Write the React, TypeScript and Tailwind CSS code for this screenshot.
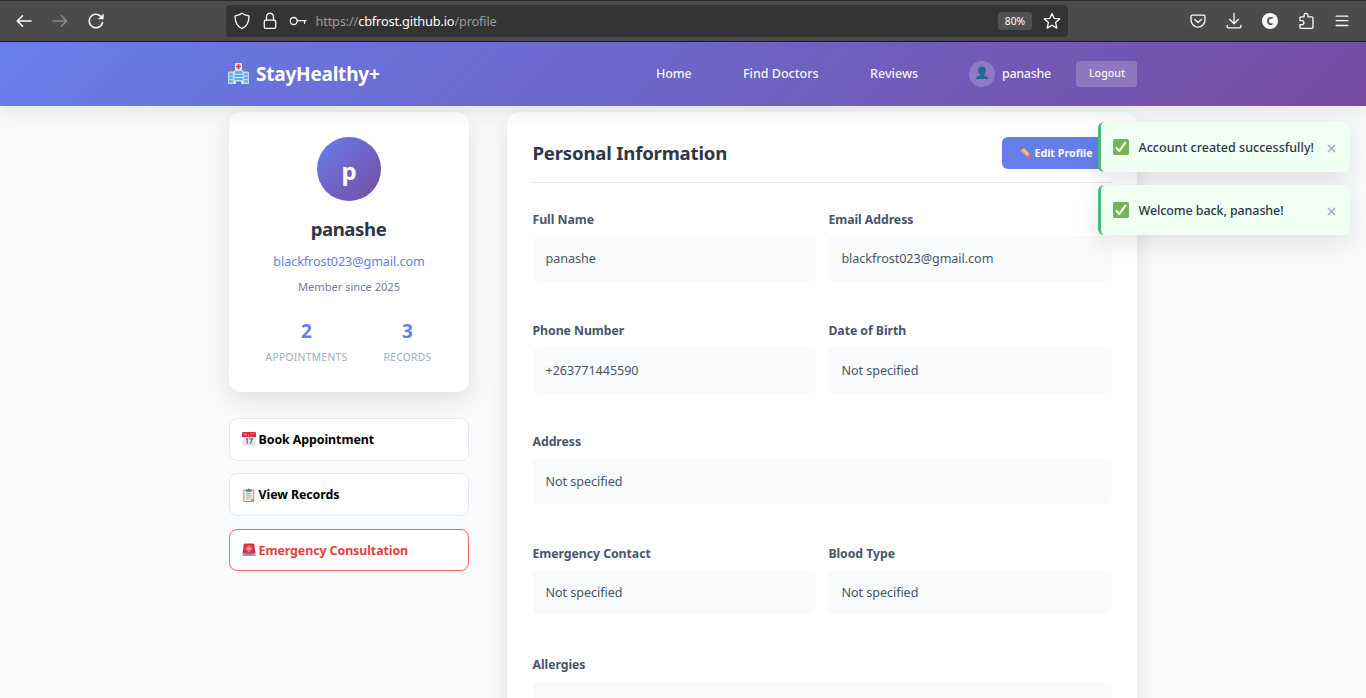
import type { ReactNode } from "react";

function Icon({ children, className = "", size = 18 }: { children: ReactNode; className?: string; size?: number }) {
  return (
    <svg
      width={size}
      height={size}
      viewBox="0 0 16 16"
      fill="none"
      stroke="currentColor"
      strokeWidth="1.15"
      strokeLinecap="round"
      strokeLinejoin="round"
      className={`shrink-0 ${className}`}
    >
      {children}
    </svg>
  );
}

function HospitalIcon() {
  return (
    <svg width="21" height="21" viewBox="0 0 21 21" className="mb-px shrink-0">
      <rect x="7" y="0" width="7" height="7" rx="0.8" fill="#e1e8ed" />
      <path d="M10.500 1v5M8 3.500h5" stroke="#dd2e44" strokeWidth="1.700" />
      <path d="M0 9.500 1 8.500h4.500L7 6.500h7l1.500 2H20l1 1V21H0z" fill="#ccd6dd" />
      <path d="M6 8h9v13H6z" fill="#e1e8ed" />
      <path d="M1.200 10.200h3.600v2.300H1.200zM1.200 13.700h3.600V16H1.200zM1.200 17.200h3.600v2.300H1.200zM16.200 10.200h3.600v2.300h-3.600zM16.200 13.700h3.600V16h-3.600zM16.200 17.200h3.600v2.300h-3.600zM7 8.300h7.500v2.500H7zM6.500 11.700h8.300v2.300H6.500zM6.500 15h8.300v2.200H6.500z" fill="#55acee" />
      <path d="M8 18.500h5.200V21H8z" fill="#3b88c3" />
    </svg>
  );
}

function CalendarIcon() {
  return (
    <svg width="14" height="14" viewBox="0 0 14 14" className="shrink-0">
      <path d="M.5 5h13v7.800c0 .7-.5 1.200-1.200 1.200H1.700C1 14 .5 13.500.5 12.800z" fill="#e1e8ed" />
      <path d="M1.200 0h11.600c.7 0 1.200.5 1.200 1.200V5H0V1.200C0 .5.5 0 1.200 0z" fill="#dd2e44" />
      <path d="M2 1.800l1 1.400M4 1.500v1.800M6 3.400h1M9 1.500h.8M11 1.500h1.200" stroke="#f4abba" strokeWidth="0.9" />
      <path d="M4 7.300l1.300-.6V12M7.200 6.900h3.200C9.300 8.500 8.700 10 8.600 12" stroke="#66757f" strokeWidth="1.200" fill="none" />
    </svg>
  );
}

function ClipboardIcon() {
  return (
    <svg width="14" height="14" viewBox="0 0 14 14" className="shrink-0">
      <rect x="1.300" y="1.500" width="11" height="12.500" rx="1.100" fill="#c58a76" />
      <path d="M2.300 2.600h9v8L8.700 13.100H2.300z" fill="#e8eef2" />
      <path d="M11.300 10.600 8.700 13.100v-2.500z" fill="#b3bfc8" />
      <path d="M4.200 5.500h5.400M4.200 7.300h5.400M4.200 9.100h5.400M4.200 10.900h3" stroke="#99aab5" strokeWidth="0.8" />
      <path d="M4 1.800h1.500a1.300 1.300 0 0 1 2.600 0h1.500v1.900H4z" fill="#66757f" />
    </svg>
  );
}

function SirenIcon() {
  return (
    <svg width="14" height="14" viewBox="0 0 14 14" className="shrink-0">
      <path d="M2.800.5h8.400c.6 0 1 .4 1.100 1L13.500 10.500H.5L1.700 1.500c.1-.6.5-1 1.100-1z" fill="#dd2e44" />
      <path d="M7 2.200v7M3.700 5.700h6.600M4.700 3.400l4.600 4.600M9.300 3.400 4.700 8" stroke="#f4abba" strokeWidth="1" />
      <path d="M.5 10.300h13l.5 2.700H0z" fill="#99aab5" />
      <path d="M2.500 10.300h9v1.200h-9z" fill="#66757f" />
    </svg>
  );
}

function PencilIcon() {
  return (
    <svg width="12" height="12" viewBox="0 0 12 12" className="shrink-0">
      <path d="M.6.6 3.600 1.500 1.500 3.700z" fill="#662113" />
      <path d="M1 1.400 3.900 1.200 4.700 2 2 4.700l-.8-.8z" fill="#ea9a7a" />
      <path d="M4.100 1.500 9.300 6.600 6.600 9.300 1.500 4.100z" fill="#ffcc4d" />
      <path d="M1.500 4.100 2.600 2.900l5.300 5.200-1.300 1.200z" fill="#f4a640" />
      <path d="M9.300 6.600l1 1-2.700 2.700-1-1z" fill="#99aab5" />
      <path d="M10.300 7.600l1 1c.9 1-1.700 3.600-2.700 2.700l-1-1z" fill="#ea596e" />
    </svg>
  );
}

function CheckIcon() {
  return (
    <svg width="16" height="16" viewBox="0 0 16 16" className="shrink-0">
      <rect width="16" height="16" rx="1.800" fill="#77b255" />
      <path d="M3.400 8.900 6.300 12 12.400 3.700" stroke="#fff" strokeWidth="2.100" strokeLinecap="round" strokeLinejoin="round" fill="none" />
    </svg>
  );
}

function BrowserBar() {
  return (
    <div className="flex h-[42px] shrink-0 items-center border-t border-b border-t-[#2a2a2e] border-b-[#1c1b1d] bg-[#4b4b4b] text-[#fbfbfe]">
      <div className="flex w-[226px] items-center gap-[18px] pl-[15px]">
        <Icon>
          <path d="M14.300 8H2M6.700 3.300 2 8l4.700 4.700" strokeWidth="1.400" />
        </Icon>
        <Icon className="text-[#8b8b8b]">
          <path d="M1.700 8H14M9.300 3.300 14 8l-4.700 4.700" strokeWidth="1.400" />
        </Icon>
        <Icon>
          <path d="M13.800 9.300A6 6 0 1 1 12 3.600" strokeWidth="1.400" />
          <path d="M14.800 1.300v5.200H9.600z" fill="currentColor" stroke="none" />
        </Icon>
      </div>
      <div className="flex h-8 w-[842px] items-center rounded-[4px] bg-[#343434] pr-[7px] pl-[7px]">
        <Icon>
          <path d="M8 1.200c2 1.500 4 2 6.200 2.300 0 5-1.200 9-6.200 11.300C3 12.500 1.800 8.500 1.800 3.500 4 3.200 6 2.700 8 1.200z" />
        </Icon>
        <Icon className="ml-[10px]">
          <rect x="2.900" y="7.200" width="10.200" height="7.400" rx="1.200" />
          <path d="M4.900 7V4.200a3.100 3.100 0 0 1 6.200 0V7" />
        </Icon>
        <Icon className="ml-[10px]">
          <circle cx="4.200" cy="8" r="3.100" />
          <path d="M7.300 7.600h7.900M13.800 7.800v2.300" />
        </Icon>
        <div className="ml-[8.500px] text-[12.800px] leading-[18px] tracking-[-0.180px] text-[#9a9a9a]">
          https://<span className="text-[#fbfbfe]">cbfrost.github.io</span>/profile
        </div>
        <div className="ml-auto flex h-[18px] w-[34px] items-center justify-center rounded-[3px] bg-[#525252] pt-px text-[10.300px]">
          80%
        </div>
        <Icon className="ml-[11px]">
          <path d="M8 1.300l2 4.400 4.800.5-3.600 3.200 1.100 4.900L8 11.800l-4.300 2.500 1.100-4.900L1.200 6.200 6 5.700z" />
        </Icon>
      </div>
      <div className="ml-auto flex items-center gap-[18px] pr-[15px]">
        <Icon>
          <path d="M3.100 2.700h9.800c.8 0 1.300.5 1.300 1.200v3.300a6.200 6.200 0 0 1-12.400 0V3.900c0-.7.5-1.200 1.300-1.200z" />
          <path d="M5.100 6.700 8 9.300l2.900-2.600" />
        </Icon>
        <Icon>
          <path d="M8 1v9.300M4 6.500l4 4 4-4M1.900 11.800v1.400c0 .6.4 1 1 1h10.200c.6 0 1-.4 1-1v-1.400" />
        </Icon>
        <span className="flex size-[18px] items-center justify-center">
          <span className="flex size-4 items-center justify-center rounded-full bg-[#fbfbfe] text-[10.500px] leading-none font-extrabold text-[#4b4b4b]">
            C
          </span>
        </span>
        <Icon>
          <path d="M6.300 4.300V2.900a1.700 1.700 0 0 1 3.400 0v1.400h3.500c.6 0 1 .4 1 1v8.300c0 .6-.4 1-1 1H3.600c-.6 0-1-.4-1-1v-2.400h1.800a1.700 1.700 0 0 0 0-3.500H2.600V5.300c0-.6.4-1 1-1z" />
        </Icon>
        <Icon>
          <path d="M2.800 3.700h10.400M2.800 7.700h10.400M2.800 12h10.400" />
        </Icon>
      </div>
    </div>
  );
}

function Header() {
  return (
    <header className="relative z-10 h-16 shrink-0 bg-[linear-gradient(135deg,#667eea_0%,#764ba2_100%)] text-white shadow-[0_4px_20px_rgba(0,0,0,0.1)]">
      <div className="mx-auto flex h-full w-[910px] items-center pr-px">
        <div className="flex items-center gap-[7px]">
          <HospitalIcon />
          <span className="text-[19px] leading-6 font-bold tracking-[-0.220px]">StayHealthy+</span>
        </div>
        <nav className="ml-auto flex items-center text-[12.500px] leading-5 font-medium text-white/95">
          <a className="w-[87px] tracking-[-0.100px]">Home</a>
          <a className="w-[127px]">Find Doctors</a>
          <a className="w-[99px] tracking-[0.050px]">Reviews</a>
          <span className="mr-[7px] flex size-[26px] items-center justify-center rounded-full bg-white/20">
            <svg width="14" height="14" viewBox="0 0 14 14" fill="#22699a" className="mb-0.5">
              <path d="M7 .6c2.500 0 3.900 1.500 3.900 3.600 0 1.800-.7 3.400-1.700 4.200v1.400c2.400.3 4 1.200 4.300 3.200H.5c.3-2 1.900-2.900 4.300-3.200V8.400C3.800 7.600 3.100 6 3.100 4.200 3.100 2.100 4.500.6 7 .6z" />
            </svg>
          </span>
          <span className="w-[74px] tracking-[-0.300px]">panashe</span>
          <button className="h-[26px] w-[61px] rounded-[3px] bg-white/20 pb-px pl-px text-[10.700px] leading-none">
            Logout
          </button>
        </nav>
      </div>
    </header>
  );
}

function Stat({ value, label, width }: { value: string; label: string; width: string }) {
  return (
    <div className={width}>
      <div className="text-[19px] leading-[26px] font-bold text-[#667eea]">{value}</div>
      <div className="text-[10.300px] leading-[26px] tracking-[0.300px] text-[#a0aec0]">{label}</div>
    </div>
  );
}

function Action({ icon, label, urgent = false }: { icon: ReactNode; label: string; urgent?: boolean }) {
  return (
    <button
      className={`flex h-[42.600px] items-center gap-[2.600px] rounded-[8px] border bg-white pl-[12px] text-[12.400px] leading-5 font-bold ${
        urgent ? "border-[#f56565] text-[#e53e3e]" : "border-[#e2e8f0] text-black"
      }`}
    >
      {icon}
      <span className="pt-px tracking-[-0.080px]">{label}</span>
    </button>
  );
}

function Sidebar() {
  return (
    <aside className="w-60 shrink-0">
      <div className="flex h-[280px] flex-col items-center rounded-[12px] bg-white pt-[25px] text-center shadow-[0_8px_25px_rgba(0,0,0,0.1)]">
        <div className="flex size-16 items-center justify-center rounded-full bg-[linear-gradient(135deg,#667eea_0%,#764ba2_100%)] pt-[3px] text-[24px] leading-none font-bold text-white">
          p
        </div>
        <div className="mt-[15px] pr-px text-[18.600px] leading-[26px] font-bold tracking-[-0.420px] text-[#2d3748]">
          panashe
        </div>
        <div className="mt-[10px] text-[12.600px] leading-5 tracking-[-0.080px] text-[#667eea]">
          blackfrost023@gmail.com
        </div>
        <div className="mt-[6px] text-[11.100px] leading-[18px] text-[#718096]">Member since 2025</div>
        <div className="mt-[22px] flex pr-px">
          <Stat value="2" label="APPOINTMENTS" width="w-[118px]" />
          <Stat value="3" label="RECORDS" width="w-[84px]" />
        </div>
      </div>
      <div className="mt-[26px] flex flex-col gap-[12.800px]">
        <Action icon={<CalendarIcon />} label="Book Appointment" />
        <Action icon={<ClipboardIcon />} label="View Records" />
        <Action icon={<SirenIcon />} label="Emergency Consultation" urgent />
      </div>
    </aside>
  );
}

function Field({ label, value, wide = false }: { label: string; value: string; wide?: boolean }) {
  return (
    <div className={`h-[111.250px] ${wide ? "col-span-2" : ""}`}>
      <div className="text-[12.300px] leading-5 font-bold tracking-[-0.060px] text-[#4a5568]">{label}</div>
      <div className="mt-[6px] flex h-[45.600px] items-center rounded-[6.400px] bg-[#f8fafc] px-[13px] pt-[2.500px] text-[12.600px] tracking-[-0.050px] text-[#4a5568]">
        {value}
      </div>
    </div>
  );
}

function PersonalInfo() {
  return (
    <section className="h-[700px] w-[630px] shrink-0 rounded-[12px] bg-white px-[25.500px] pt-[25px] shadow-[0_8px_25px_rgba(0,0,0,0.1)]">
      <div className="flex h-[46px] items-start justify-between border-b border-[#e2e8f0]">
        <h2 className="text-[18.600px] leading-[31px] font-bold tracking-[-0.200px] text-[#2d3748]">
          Personal Information
        </h2>
        <button className="flex h-8 w-[110px] items-center justify-center gap-[2px] rounded-[6px] bg-[#667eea] text-[10.700px] font-bold text-white">
          <PencilIcon />
          Edit Profile
        </button>
      </div>
      <div className="mt-[26.900px] grid grid-cols-2 gap-x-[12.800px]">
        <Field label="Full Name" value="panashe" />
        <Field label="Email Address" value="blackfrost023@gmail.com" />
        <Field label="Phone Number" value="+263771445590" />
        <Field label="Date of Birth" value="Not specified" />
        <Field label="Address" value="Not specified" wide />
        <Field label="Emergency Contact" value="Not specified" />
        <Field label="Blood Type" value="Not specified" />
        <Field label="Allergies" value="" wide />
      </div>
    </section>
  );
}

function Toast({ message, tracking }: { message: string; tracking: string }) {
  return (
    <div className="flex h-[50px] w-[252px] items-center rounded-[6.400px] border-l-[3px] border-[#48bb78] bg-[#f0fff4] pr-[14px] pl-[12px] shadow-[0_8px_25px_rgba(0,0,0,0.1)]">
      <CheckIcon />
      <span
        className={`ml-[9.500px] pt-[2px] text-[12.500px] leading-5 font-medium whitespace-nowrap text-[#2d3748] ${tracking}`}
      >
        {message}
      </span>
      <svg width="9" height="9" viewBox="0 0 9 9" stroke="#a0aec0" strokeWidth="1.500" className="mt-[2px] ml-auto">
        <path d="M1 1l7 7M8 1l-7 7" />
      </svg>
    </div>
  );
}

export default function App() {
  return (
    <div className="relative flex h-[698px] w-[1366px] flex-col overflow-hidden bg-[#f8fafc] font-['Noto_Sans',sans-serif]">
      <BrowserBar />
      <Header />
      <main className="flex items-start gap-[38px] pt-[6px] pl-[229px]">
        <Sidebar />
        <PersonalInfo />
      </main>
      <div className="absolute top-[122px] right-4 z-20 flex flex-col gap-[13px]">
        <Toast message="Account created successfully!" tracking="tracking-[0.020px]" />
        <Toast message="Welcome back, panashe!" tracking="tracking-[-0.100px]" />
      </div>
    </div>
  );
}
